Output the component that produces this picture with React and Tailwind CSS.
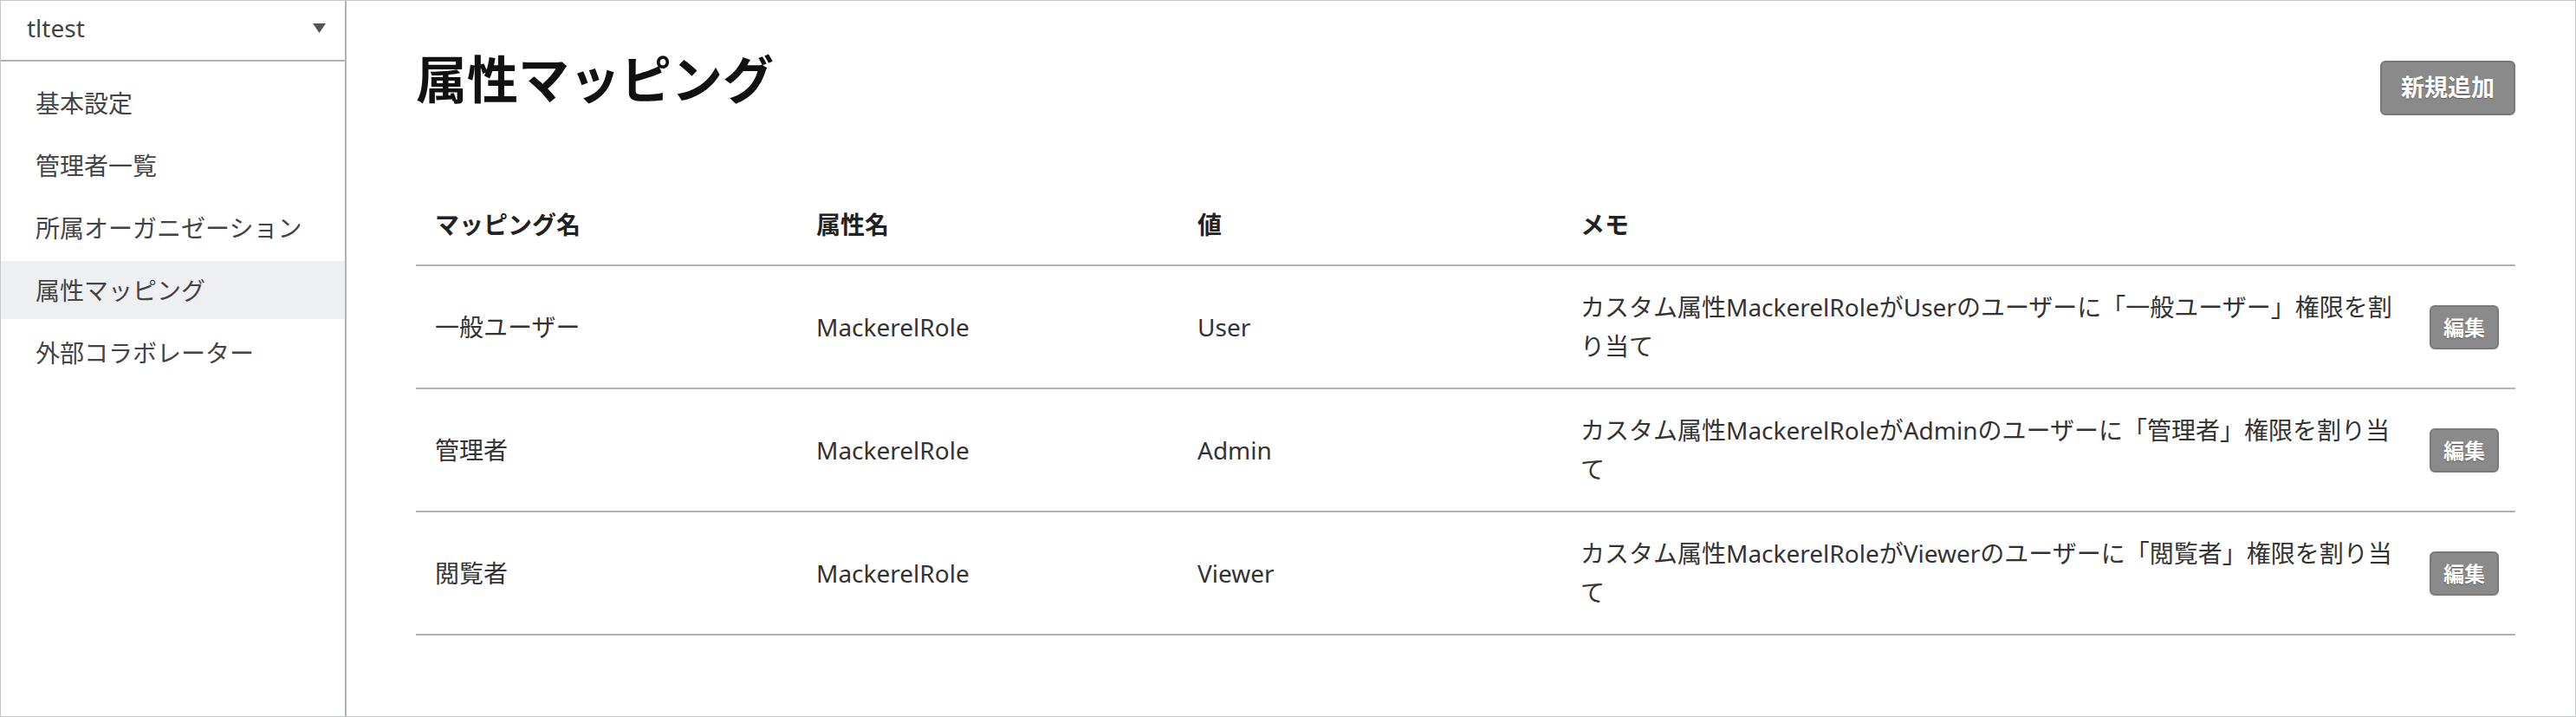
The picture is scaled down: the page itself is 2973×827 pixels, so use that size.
import React from "react";

const navItems = ["基本設定", "管理者一覧", "所属オーガニゼーション", "属性マッピング", "外部コラボレーター"];

const mappings = [
  { name: "一般ユーザー", attr: "MackerelRole", value: "User", memo: "カスタム属性MackerelRoleがUserのユーザーに「一般ユーザー」権限を割り当て" },
  { name: "管理者", attr: "MackerelRole", value: "Admin", memo: "カスタム属性MackerelRoleがAdminのユーザーに「管理者」権限を割り当て" },
  { name: "閲覧者", attr: "MackerelRole", value: "Viewer", memo: "カスタム属性MackerelRoleがViewerのユーザーに「閲覧者」権限を割り当て" },
];

function Sidebar() {
  return (
    <aside className="w-[399px] shrink-0 border-r-2 border-[#b1b4b7] flex flex-col">
      {/* org selector */}
      <div className="h-[70px] border-b-2 border-[#b1b4b7] flex items-center justify-between pl-[30px] pr-[22px] pb-[6px]">
        <span className="text-[28px] text-[#444]">tltest</span>
        <svg width="15" height="11" viewBox="0 0 15 11">
          <polygon points="0,0 15,0 7.5,11" fill="#555" />
        </svg>
      </div>

      <nav className="pt-[14px] flex flex-col gap-[5px]">
        {navItems.map((item) => (
          <div
            key={item}
            className={`h-[67px] flex items-center pl-[40px] text-[28px] text-[#444] ${
              item === "属性マッピング" ? "bg-[#eeeff1]" : ""
            }`}
          >
            {item}
          </div>
        ))}
      </nav>
    </aside>
  );
}

function EditButton() {
  return (
    <button className="w-[80px] h-[51px] rounded-[6px] bg-[#8a8a8a] border-2 border-[#7a7a7a] text-white text-[24px] font-bold [text-shadow:0_1px_1px_rgba(0,0,0,0.35)]">
      編集
    </button>
  );
}

export default function App() {
  return (
    <div
      className="w-[2973px] h-[827px] border border-[#c4c6c8] flex bg-white"
      style={{ fontFamily: '"Noto Sans", "Noto Sans CJK JP", sans-serif' }}
    >
      <Sidebar />

      <main className="flex-1 pl-[80px] pr-[69px] pt-[54px]">
        {/* title row */}
        <div className="flex items-start justify-between">
          <h1 className="text-[59px] leading-[72px] font-bold text-[#111]">属性マッピング</h1>
          <button className="mt-[15px] h-[63px] px-[22px] rounded-[6px] bg-[#8a8a8a] border-2 border-[#777] text-white text-[27px] font-bold [text-shadow:0_1px_1px_rgba(0,0,0,0.35)]">
            新規追加
          </button>
        </div>

        <table className="mt-[81px] w-full table-fixed border-collapse text-[28px] leading-[45px]">
          <thead>
            <tr className="border-b-2 border-[#b1b4b7] text-left text-[#222]">
              <th className="w-[440px] pl-[22px] py-[23px] font-bold">マッピング名</th>
              <th className="w-[440px] pl-[22px] py-[23px] font-bold">属性名</th>
              <th className="w-[442px] pl-[22px] py-[23px] font-bold">値</th>
              <th className="pl-[22px] py-[23px] font-bold">メモ</th>
              <th className="w-[121px]"></th>
            </tr>
          </thead>
          <tbody className="text-[#333]">
            {mappings.map((m) => (
              <tr key={m.name} className="border-b-2 border-[#b1b4b7]">
                <td className="pl-[22px] py-[25px] align-middle">{m.name}</td>
                <td className="pl-[22px] py-[25px] align-middle">{m.attr}</td>
                <td className="pl-[22px] py-[25px] align-middle">{m.value}</td>
                <td className="pl-[22px] pr-[8px] py-[25px] align-middle">{m.memo}</td>
                <td className="pl-[22px] pr-[19px] align-middle">
                  <EditButton />
                </td>
              </tr>
            ))}
          </tbody>
        </table>
      </main>
    </div>
  );
}
